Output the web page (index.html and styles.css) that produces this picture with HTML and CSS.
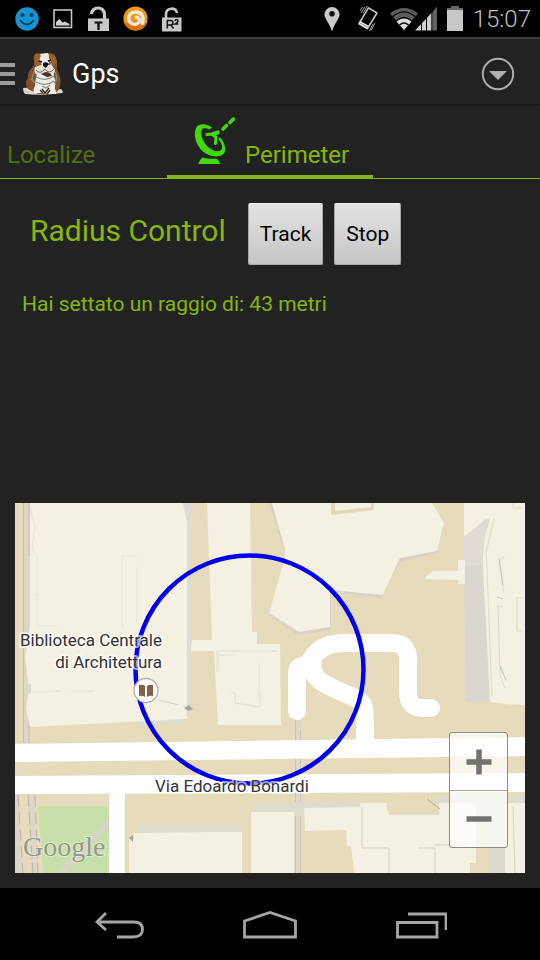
FILE: index.html
```html
<!DOCTYPE html>
<html lang="it">
<head>
<meta charset="utf-8">
<meta name="viewport" content="width=device-width, initial-scale=1">
<title>Gps</title>
<link rel="stylesheet" href="styles.css">
</head>
<body>
<div class="screen">
  <div class="status-bar">
    <div class="status-group notifications">
      <svg width="24" height="24" viewBox="0 0 24 24" aria-hidden="true">
        <circle cx="12" cy="12" r="11.7" fill="#1593d2"/>
        <circle cx="7.500" cy="8" r="2" fill="#073e5d"/><circle cx="16.500" cy="8" r="2" fill="#073e5d"/>
        <path d="M5.500 13.500Q12 21.500 18.500 13.500" fill="none" stroke="#073e5d" stroke-width="1.800" stroke-linecap="round"/>
      </svg>
      <svg width="20" height="20" viewBox="0 0 20 20" aria-hidden="true">
        <rect x="1" y="1" width="17.500" height="17.500" fill="none" stroke="#c4c4c4" stroke-width="1.600"/>
        <path d="M3 16.500V13l3.500-3 3 3.500 2.500-1 4.500 2.500v1.500z" fill="#d0d0d0"/>
      </svg>
      <svg width="22" height="26" viewBox="0 0 22 26" aria-hidden="true">
        <path d="M4.500 8a6.500 6 0 0 1 13 0V14" fill="none" stroke="#c8c8c8" stroke-width="3.200"/>
        <path d="M1 12.500h21v12.500H1z" fill="#c8c8c8"/>
        <path d="M7.500 15.500h8v2h-2.800V24h-2.400v-6.500H7.500z" fill="#111"/>
      </svg>
      <svg width="25" height="25" viewBox="0 0 26 26" aria-hidden="true">
        <circle cx="13" cy="13" r="12.600" fill="#ec9a1c"/>
        <path d="M1.500 18a12.600 12.600 0 0 0 22 2L17 15z" fill="#dd7206"/>
        <path d="M20 18C22.500 11 19 6.300 13.500 6.300 8 6.300 5.800 10 5.800 13c0 3.500 3 6 6.700 6 2.500 0 4.500-2 4.500-4s-1.500-3.300-3.200-3.300" fill="none" stroke="#f1eadc" stroke-width="3.600" stroke-linecap="round"/>
      </svg>
      <svg class="lock-r2" width="20" height="26" viewBox="0 0 20 26" aria-hidden="true">
        <path d="M4 13V7.500a5.600 5.600 0 0 1 11-.5" fill="none" stroke="#c8c8c8" stroke-width="2.600"/>
        <path d="M0 11.500h19.500V25.500H0z" fill="#c8c8c8"/>
        <path d="M5.300 22.500v-8h3.200q2.500 0 2.500 2.200t-2.500 2.200H5.300m3.500 0 2.700 3.600M13 15q.2-1.500 1.600-1.500t1.400 1.400q0 1-3 3.200h3.300" fill="none" stroke="#111" stroke-width="1.500"/>
      </svg>
    </div>
    <div class="status-group system">
      <svg width="16" height="26" viewBox="0 0 16 26" aria-hidden="true">
        <path d="M8 1a7.500 7.500 0 0 1 7.500 7.500C15.500 13 10.500 17 8 25.500 5.500 17 .5 13 .5 8.500A7.500 7.500 0 0 1 8 1z" fill="#cacaca"/>
        <circle cx="8" cy="7.800" r="2.800" fill="#111"/>
      </svg>
      <svg class="vibrate" width="22" height="27" viewBox="0 0 22 27" aria-hidden="true">
        <path d="M11.500 2.800 20 8 10.500 23.500 2 18.500z" fill="none" stroke="#c8c8c8" stroke-width="1.500" stroke-linejoin="round"/>
        <path d="m2 18.500 8.500 5M3 16.800l8.300 4.700" stroke="#ddd" stroke-width="1.800"/>
        <path d="M8 1.500 4 8M10.500 1 6 8.500M18 18l-4 7.500M16 19l-3.500 7M5.500 2 3 6" stroke="#b5b5b5" stroke-width=".9"/>
      </svg>
      <svg class="wifi" width="28" height="24" viewBox="0 0 28 24" aria-hidden="true">
        <path d="M0 6.500Q14-4.500 28 6.500L14 23z" fill="#5c5c5c"/>
        <path d="M6.500 14.500Q14 8.500 21.500 14.500L14 23z" fill="#ddd"/>
        <path d="M2.500 9.800Q14 0 25.500 9.800M6 14Q14 7 22 14M9.500 18Q14 14 18.500 18" fill="none" stroke="#080808" stroke-width="1.300"/>
      </svg>
      <svg width="22" height="25" viewBox="0 0 22 25" aria-hidden="true">
        <path d="M0 24.500 17 6.500v18z" fill="#d0d0d0"/><path d="m17 6.500 5-6v24h-5z" fill="#606060"/>
        <path d="M6.500 15v10M11.500 10v15M16.800 4v21" stroke="#080808"/>
      </svg>
      <svg class="battery" width="16" height="25" viewBox="0 0 16 25" aria-hidden="true">
        <path d="M4 0h8v2h4v23H0V2h4z" fill="#686868"/><path d="M0 4h16v21H0z" fill="#c8c8c8"/>
      </svg>
      <time class="clock">15:07</time>
    </div>
  </div>

  <header class="action-bar">
    <button class="home-button" type="button" aria-label="Menu">
      <svg width="15" height="24" viewBox="0 0 15 24" aria-hidden="true"><path d="M0 3h15M0 12h15M0 21h15" stroke="#9b9b9b" stroke-width="4"/></svg>
      <svg class="dog" width="40" height="43" viewBox="0 0 40 43" aria-hidden="true">
        <path d="M0 36q5-1 8 1l10 4 20-4q3 3 1 4-20 3-37 1-2-2-2-6z" fill="#ddd4cc"/>
        <path d="M12 2q-3 4 0 8l-2 5Q4 20 5 26q-4 5 0 11l10 5 17-1q7-4 5-16l-3-8V9L31 2l-8-1z" fill="#835123"/>
        <path d="M17 2 25 1q2 5 3 10l3 13q3 9-1 17H16q-6-3-3-15l3-12z" fill="#eeeae6"/>
        <path d="M12 2q5-2 6 2l-3 5-4 3zM26 1q7 1 8 9l-3 3-5-7zM12 11l5-2 2 4-5 3zM26 9l5 2-1 5-4-3z" fill="#9a612b"/>
        <path d="M12 15q-2 5 2 8h5l2-5 3 5q8 2 8-5l-4-6-5 3-5-2z" fill="#e4e0da"/>
        <path d="M20 11q4-2 6 1l-3 4-3-2z" fill="#111"/><path d="m16 9 3 1m6-1 3-1" stroke="#111" stroke-width="1.500"/>
        <path d="M18 22q3-2 6-2 4 1 5 4l-5 1z" fill="#4b3328"/><path d="M13 18q4 5 9-1 4 6 9 0" fill="none" stroke="#73695f"/>
        <path d="M11 20q-4 7 1 11m20-11q4 7-1 11M13 25q10 5 18-1m-18 6q10 5 18-1m-12 5 4 2 4-3M8 27l3 3m23-5-2 5" fill="none" stroke="#849089" stroke-width="1.200"/>
        <path d="M14 32q-5 4-3 9h10l-2-5zM28 32l-5 6 1 4h9q0-7-5-10z" fill="#f3eee9"/>
        <path d="m17 38 3 3m-1-4 3 4m4-5-4 5m5-3-3 4" fill="none" stroke="#432812" stroke-width="1.400"/>
      </svg>
      <span class="title">Gps</span>
    </button>
    <button class="overflow" type="button" aria-label="Altre opzioni">
      <svg width="34" height="34" viewBox="0 0 34 34" aria-hidden="true"><circle cx="17" cy="17" r="15.200" fill="none" stroke="#b0b0b0" stroke-width="1.900"/><path d="M8 14h18l-9 9z" fill="#b0b0b0"/></svg>
    </button>
  </header>

  <nav class="tabs">
    <a class="tab" href="#localize">Localize</a>
    <a class="tab selected" href="#perimeter" aria-current="page">
      <svg width="44" height="50" viewBox="0 0 44 50" aria-hidden="true">
        <path d="M19 11.500C13 7 5 7.500 3 12-1 22 6 35 16 39c8 3 15 1 16-4 .7-4-1-9-5-14l-1.500 2c3 4 4.500 8 3 10.500-2 3-9 2-14-3C9 25 7 17 9 13.500c1.500-2 5-1.500 7.500 0z" fill="#42da0c"/>
        <path d="m14 18.500 5-.5 6-2M20 19l3 2-.5 6.500M21 18l4-1" fill="none" stroke="#42da0c" stroke-width="3.200" stroke-linecap="round" stroke-linejoin="round"/>
        <path d="m30 13 3.500-3.500M37 6.500 40.500 3" stroke="#42da0c" stroke-width="3.600" stroke-linecap="round"/>
        <path d="M5.500 48q1-5 4.500-6.500 6 2 13 1 3.500 2 4 5.500z" fill="#42da0c"/>
      </svg>
      <span>Perimeter</span>
    </a>
  </nav>

  <main class="content">
    <div class="radius-row">
      <h1 class="heading">Radius Control</h1>
      <button class="action" type="button">Track</button>
      <button class="action" type="button">Stop</button>
    </div>
    <p class="message">Hai settato un raggio di: 43 metri</p>

    <section class="map" aria-label="Mappa">
      <svg class="map-canvas" viewBox="15 503 510 370">
        <path d="M15 503h510v370H15z" fill="#e6dcbb"/>
        <path d="M23 503h6v240h-5z" fill="#ddd6cc"/>
        <path d="M23.500 503v240M29 503v53M29 700v43" stroke="#c1b9ae" stroke-width=".8"/>
        <path d="M186 503h6v208l-12 11-40 4-2-23z" fill="#dddbd2"/>
        <path d="M30 503h153l4 20v196l-157 8-4-18 3-20-4-32 5-30z" fill="#f4f0e2"/>
        <path d="M30 507l5 18-3 24 5 7v70h20m65 0V556h15m-15 70h2m13-59v57m-99 18 40 2m-42-50 4 2m-8 96 29-1m10 0h23" fill="none" stroke="#e6e2d5"/>
        <path d="M25 684h6v9l-5 2z" fill="#dcd9cf"/>
        <path d="m184 708 5-3 4 4-5 2z" fill="#a8a69a"/><path d="m158 700 21 5" stroke="#d8d4c8"/>
        <path d="M207 503h43l2 129h5v12h23l1 81h-63l-4-74h-23l1-11h20z" fill="#f4f0e2"/>
        <path d="M217 672v-21h60m-59 20v-16h15m26 8v35m-28-5h4v10l25 4v-14" fill="none" stroke="#e2ded0"/>
        <path d="m269 503 15 48-2 12 1 4-14 48 28 20 34-5v-38l51 6 18-36 36-9 8-26-12-24z" fill="#d8d3c6"/>
        <path d="m272 503 13 46-1 12-15 52 30 19 31-5v-37l53 5 17-37 37-7 7-28-12-20z" fill="#f4f0e2"/>
        <path d="M331 503v12l43-5v-7h-3v4l-36 4v-8z" fill="#e1d8ba"/>
        <path d="M464 503h62v199h-60l-2-140z" fill="#d9d7ce"/>
        <path d="M464 503h61v202l-20-1-15-2-8-155 8-29-24 18h-2z" fill="#f4f0e2"/>
        <path d="m487 518-23 19v28h18z" fill="#dfddd3"/>
        <path d="m486 547 6 149m-6-143 8-35m10 39-5 5 5 31m-1 14-5-1 2 69 5 13m19-90h-7v33h6M513 503v5h9" fill="none" stroke="#e0dccf" stroke-width="1.200"/>
        <path d="m499 558 4 27m-6 12 6 2m-3 67 6 14" fill="none" stroke="#cdcabd" stroke-width="1.200"/>
        <path d="m425 577 8-6h25v-11h7v24h-7v-4l-32-1z" fill="#f4f0e2"/>
        <path d="M295 710h6v163h-6z" fill="#ddd7cc"/><path d="M295.500 710v163M300.500 730v143" stroke="#c7bfb2" stroke-width=".8"/>
        <path d="M297 711v-37c0-7 4-9 11-9 6-14 18-22 36-22h48c11 0 16 6 16 16v33c0 11 5 16 15 16h8M313 659c-4 17 8 24 22 30 10 5 21 8 26 13 4 4 4 6 4 45" fill="none" stroke="#fff" stroke-width="18" stroke-linecap="round" stroke-linejoin="round"/>
        <path d="m15 744 510-7v19l-510 6zM15 776l510-3v19l-510 2z" fill="#fff"/>
        <path d="M15 795h4l3 78h-7zM28 795h6l4 78h-7z" fill="#ddd4ca"/><path d="m18 795 5 78m5-78 5 78m2-78 3 78" stroke="#bdb4a8" stroke-dasharray="12 5"/>
        <path d="M38 806h71v67H43z" fill="#c8dfa9"/><path d="m57 873 52-55v8l-43 47z" fill="#d9d4c7"/>
        <path d="M109 793h16v80h-16z" fill="#fff"/>
        <path d="M137 824h105v49H130v-35h7zM253 802h48v14h-48z" fill="#dedccb"/><path d="M134 833l76-1h32v41H129v-34h5zM251 812h43v61h-43z" fill="#f4f0e2"/>
        <path d="m129 838 4-3v7z" fill="#aaa79a"/>
        <path d="M302 801h58v14h-58zM388 814h52v-7l-8-11h93v20H388z" fill="#dfdccb"/>
        <path d="m304 808 56-1v-4h26l3 12h50v-12h31l6 5v55h-6v10H354l-3-27h-4l-1-16-41 1zM505 803h20v70h-20z" fill="#f4f0e2"/>
        <path d="M490 807h15v66h-15z" fill="#dddace"/>
        <path d="M362 807v41h27v25m29-25h17v25m0-28h32M513 807l2 66" fill="none" stroke="#d5d1c4"/><path d="m427 799 13 10" fill="none" stroke="#b5b09f"/>
        <circle cx="249.500" cy="669.500" r="114" fill="none" stroke="#00e" stroke-width="4.500"/>
        <circle cx="146" cy="690.500" r="12" fill="#fff" stroke="#b5b1a8" stroke-width="1.300"/>
        <path d="M139 685q4-1 6 1v11q-3-2-6-1zM147 686q3-2 6-1v11q-3-1-6 1z" fill="#846045"/>
        <g class="map-label"><text x="162" y="646" text-anchor="end">Biblioteca Centrale</text><text x="162" y="668" text-anchor="end">di Architettura</text><text x="155" y="792">Via Edoardo Bonardi</text></g>
        <text class="google" x="23" y="856">Google</text>
      </svg>
      <div class="zoom">
        <button type="button" aria-label="Zoom avanti"><svg width="26" height="26" viewBox="0 0 26 26" aria-hidden="true"><path d="M.5 13h25M13 .5v25" stroke="#737373" stroke-width="5.500"/></svg></button>
        <button type="button" aria-label="Zoom indietro"><svg width="26" height="26" viewBox="0 0 26 26" aria-hidden="true"><path d="M.5 13h25" stroke="#737373" stroke-width="5.500"/></svg></button>
      </div>
    </section>
  </main>

  <nav class="nav-bar" aria-label="Sistema">
    <button type="button" aria-label="Indietro"><svg width="52" height="30" viewBox="0 0 52 30" aria-hidden="true"><path d="M4 11h37c6 0 8.500 3 8.500 7.500S47 26 40 26H24M13 2 4 11l9 8" fill="none" stroke="#a5a5a5" stroke-width="2.800"/></svg></button>
    <button type="button" aria-label="Home"><svg width="56" height="30" viewBox="0 0 56 30" aria-hidden="true"><path d="M2.500 10 28 1.500 53.500 10v16h-51z" fill="none" stroke="#a5a5a5" stroke-width="2.800"/></svg></button>
    <button type="button" aria-label="App recenti"><svg width="52" height="30" viewBox="0 0 52 30" aria-hidden="true"><path d="M2.500 11.500H42V26H2.500zM13 3h38v16" fill="none" stroke="#a5a5a5" stroke-width="2.800"/></svg></button>
  </nav>
</div>
</body>
</html>
```
FILE: styles.css
```css
* { box-sizing: border-box; }
body { margin: 0; background: #222; color: #88b60e; font-family: Roboto, "Liberation Sans", sans-serif; }
button { margin: 0; padding: 0; border: 0; background: none; color: inherit; font: inherit; }
svg { display: block; flex: none; }

.screen { display: flex; flex-direction: column; min-height: 100vh; }

.status-bar { display: flex; justify-content: space-between; align-items: center; height: 39px; padding: 0 9px 0 15px; background: #000; border-bottom: 2px solid #3c3c3c; }
.status-group { display: flex; align-items: center; }
.notifications { gap: 14px; }
.system { gap: 9px; }
.vibrate { margin: 0 2px 0 8px; }
.wifi + svg { margin-left: -12px; }
.battery { margin: 0 1px; }
.clock { color: #c0c0c0; font-size: 24px; font-weight: 300; line-height: 36px; }

.action-bar { display: flex; align-items: center; justify-content: space-between; height: 67px; padding: 4px 25px 0 0; border-bottom: 2px solid #1b1b1b; }
.home-button { display: flex; align-items: center; gap: 8px; }
.title { margin-left: 1px; color: #fff; font-size: 27px; line-height: 32px; }

.tabs { display: flex; height: 73px; border-bottom: 1px solid #88b60e; }
.tab { display: flex; align-items: flex-end; width: 167px; padding: 0 7px 8px; color: #557013; font-size: 24px; line-height: 30px; text-decoration: none; }
.tab.selected { gap: 8px; width: auto; height: 73px; padding: 0 24px 5px 26px; color: #88b60e; border-bottom: 4px solid #88b60e; }
.tab.selected svg { margin-bottom: 4px; }

.content { display: flex; flex: 1; flex-direction: column; padding: 24px 15px 15px; }
.radius-row { display: flex; align-items: flex-start; gap: 11px; padding-left: 15px; }
.heading { margin: 12px 11px 0 0; font-size: 30px; font-weight: 400; line-height: 32px; }
.action { height: 62px; padding: 0 11px; color: #000; font-size: 21px; background: linear-gradient(#e2e2e2, #c6c6c6); border: 1px solid #a8a8a8; border-radius: 2px; border-top-color: #f0f0f0; }
.message { margin: 25px 7px 40px; font-size: 21px; line-height: 28px; }

.map { position: relative; margin-top: auto; }
.map-canvas { width: 100%; height: auto; }
.map-label { fill: #333; stroke: rgba(255, 255, 255, .6); stroke-width: 4px; stroke-linejoin: round; paint-order: stroke; font-size: 17px; }
.google { fill: #929886; stroke: rgba(255, 255, 255, .4); stroke-width: 2px; paint-order: stroke; font: 28px "Liberation Serif", serif; }
.zoom { position: absolute; right: 17px; bottom: 25px; display: flex; flex-direction: column; width: 59px; background: rgba(255, 255, 255, .72); border: 1px solid #8c8c85; border-radius: 3px; }
.zoom button { display: flex; align-items: center; justify-content: center; height: 57px; }
.zoom button + button { border-top: 1px solid #aaa9a2; }

.nav-bar { display: flex; justify-content: center; align-items: center; gap: 97px; height: 72px; background: #000; }
.nav-bar svg { margin-top: 4px; }
```
